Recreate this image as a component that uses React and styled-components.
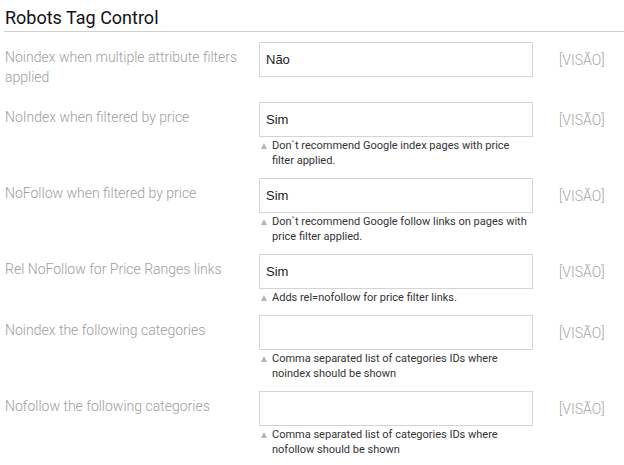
import React from "react";
import styled, { createGlobalStyle } from "styled-components";

const Global = createGlobalStyle`
  html, body { margin: 0; padding: 0; background: #fff; }
  body { font-family: Roboto, "Open Sans", Arial, sans-serif; }
`;

const Page = styled.div`
  padding: 0 0 0 4px;
  width: 620px;
`;

const Title = styled.h2`
  margin: 0;
  padding: 8px 0 3px 1px;
  font-family: Roboto, sans-serif;
  font-weight: 400;
  font-size: 18px;
  line-height: 20px;
  color: #111;
  border-bottom: 1px solid #cfcfcf;
`;

const Rows = styled.div`
  padding-top: 10px;
`;

const Row = styled.div`
  display: grid;
  grid-template-columns: 255px 274px 1fr;
  align-items: start;
  min-height: 50px;
  padding-bottom: 10px;
`;

const Label = styled.div`
  padding: 5px 0 0 1px;
  font-family: Roboto, sans-serif;
  font-weight: 300;
  font-size: 14px;
  line-height: 20px;
  color: #9d9d9d;
`;

const Field = styled.div`
  display: flex;
  flex-direction: column;
`;

const Input = styled.div`
  box-sizing: border-box;
  height: 35px;
  border: 1px solid #d4d4d4;
  background: #fff;
  padding: 0 6px;
  display: flex;
  align-items: center;
  font-family: "Liberation Sans", Arial, sans-serif;
  font-size: 13px;
  color: #222;
`;

const Hint = styled.div`
  position: relative;
  margin-top: 1px;
  padding-left: 13px;
  font-family: Roboto, sans-serif;
  font-size: 11px;
  line-height: 15px;
  color: #333;
  width: 257px;
`;

const Arrow = styled.span`
  position: absolute;
  left: 2px;
  top: 5px;
  width: 0;
  height: 0;
  border-left: 3.5px solid transparent;
  border-right: 3.5px solid transparent;
  border-bottom: 6px solid #b5b5b5;
`;

const Scope = styled.div`
  padding: 8px 0 0 26px;
  font-family: Roboto, sans-serif;
  font-weight: 300;
  font-size: 14px;
  line-height: 20px;
  color: #a5a5a5;
`;

const rows = [
  { label: "Noindex when multiple attribute filters applied", value: "Não" },
  {
    label: "NoIndex when filtered by price",
    value: "Sim",
    hint: "Don`t recommend Google index pages with price filter applied.",
  },
  {
    label: "NoFollow when filtered by price",
    value: "Sim",
    hint: "Don`t recommend Google follow links on pages with price filter applied.",
  },
  {
    label: "Rel NoFollow for Price Ranges links",
    value: "Sim",
    hint: "Adds rel=nofollow for price filter links.",
  },
  {
    label: "Noindex the following categories",
    value: "",
    hint: "Comma separated list of categories IDs where noindex should be shown",
  },
  {
    label: "Nofollow the following categories",
    value: "",
    hint: "Comma separated list of categories IDs where nofollow should be shown",
  },
];

export default function App() {
  return (
    <Page>
      <Global />
      <Title>Robots Tag Control</Title>
      <Rows>
        {rows.map((r, i) => (
          <Row key={i}>
            <Label>{r.label}</Label>
            <Field>
              <Input>{r.value}</Input>
              {r.hint && (
                <Hint>
                  <Arrow />
                  {r.hint}
                </Hint>
              )}
            </Field>
            <Scope>[VISÃO]</Scope>
          </Row>
        ))}
      </Rows>
    </Page>
  );
}
